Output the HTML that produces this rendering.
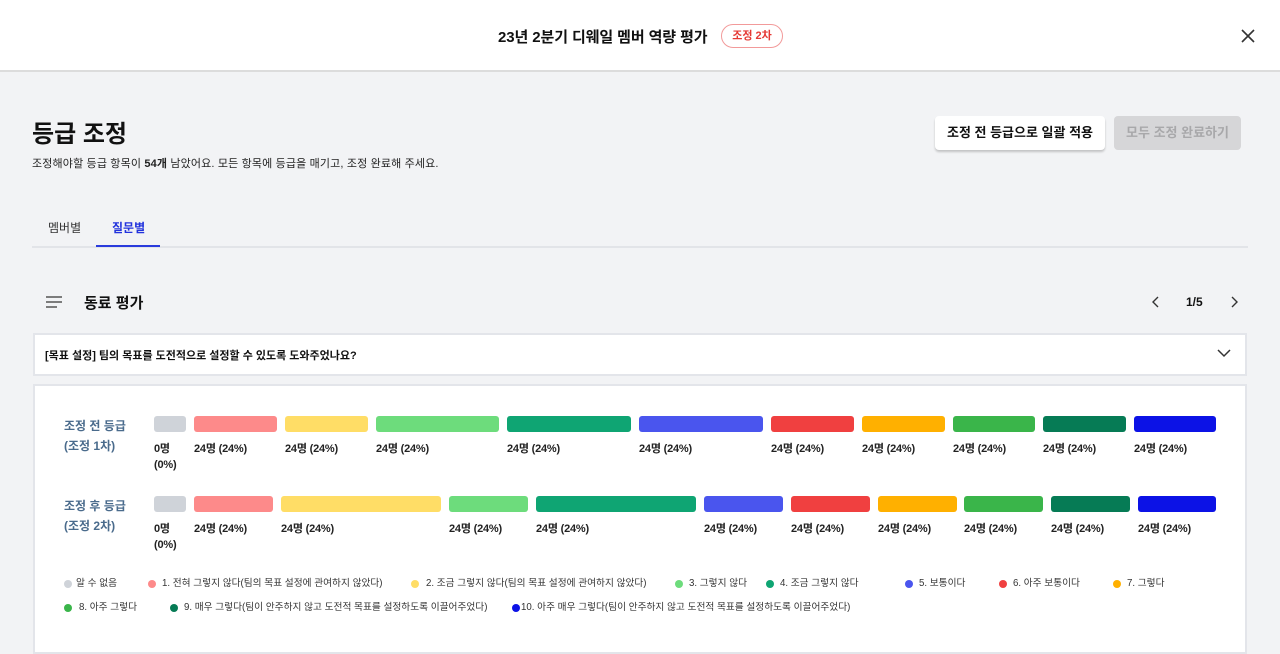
<!DOCTYPE html><html><head><meta charset="utf-8"><style>
*{margin:0;padding:0;box-sizing:border-box}
body{width:1280px;height:648px;overflow:hidden;background:#f2f3f5;font-family:"Liberation Sans","Noto Sans CJK KR",sans-serif;color:#111;position:relative}
.a{position:absolute;white-space:nowrap}
.bar{position:absolute;height:16px;border-radius:3px}
.lb{position:absolute;font-size:11px;font-weight:bold;color:#222;line-height:16px;letter-spacing:-0.2px}
.lg{position:absolute;font-size:9.7px;color:#333;line-height:12px;white-space:nowrap}
.dot{position:absolute;width:8px;height:8px;border-radius:50%}
</style></head><body>
<div class="a" style="left:0;top:0;width:1280px;height:72px;background:#fff;border-bottom:2px solid #dcdcdc"></div>
<div class="a" style="left:498px;top:26px;font-size:15px;font-weight:bold;letter-spacing:-0.1px">23년 2분기 디웨일 멤버 역량 평가</div>
<div class="a" style="left:721px;top:24px;height:24px;width:62px;border:1px solid #f29a9a;border-radius:12px;color:#e53935;font-size:11px;font-weight:bold;text-align:center;line-height:22px">조정 2차</div>
<svg class="a" style="left:1240px;top:28px" width="16" height="16"><path d="M2 2L14 14M14 2L2 14" stroke="#333" stroke-width="1.6"/></svg>
<div class="a" style="left:32px;top:114px;font-size:24px;font-weight:bold">등급 조정</div>
<div class="a" style="left:32px;top:155px;font-size:11px;color:#222;letter-spacing:0.15px">조정해야할 등급 항목이 <b>54개</b> 남았어요. 모든 항목에 등급을 매기고, 조정 완료해 주세요.</div>
<div class="a" style="left:935px;top:116px;width:170px;height:34px;background:#fff;border-radius:4px;box-shadow:0 2px 2px rgba(0,0,0,.2);font-size:13px;font-weight:bold;text-align:center;line-height:34px">조정 전 등급으로 일괄 적용</div>
<div class="a" style="left:1114px;top:116px;width:127px;height:34px;background:#d6d6d8;border-radius:4px;font-size:13px;font-weight:bold;color:#a8a8aa;text-align:center;line-height:34px">모두 조정 완료하기</div>
<div class="a" style="left:48px;top:219px;font-size:12px;color:#333">멤버별</div>
<div class="a" style="left:112px;top:219px;font-size:12px;color:#2233dd;font-weight:bold">질문별</div>
<div class="a" style="left:32px;top:246px;width:1216px;height:2px;background:#e2e4e8"></div>
<div class="a" style="left:96px;top:245px;width:64px;height:2px;background:#2a3bdc"></div>
<svg class="a" style="left:46px;top:296px" width="16" height="12"><path d="M0 1H16M0 6H16M0 11H11" stroke="#555" stroke-width="1.4"/></svg>
<div class="a" style="left:84px;top:292px;font-size:15px;font-weight:bold">동료 평가</div>
<svg class="a" style="left:1152px;top:296px" width="8" height="12"><path d="M6 1L1 6L6 11" stroke="#333" stroke-width="1.4" fill="none"/></svg>
<div class="a" style="left:1186px;top:295px;font-size:12px;font-weight:bold">1/5</div>
<svg class="a" style="left:1230px;top:296px" width="8" height="12"><path d="M2 1L7 6L2 11" stroke="#333" stroke-width="1.4" fill="none"/></svg>
<div class="a" style="left:33px;top:333px;width:1214px;height:43px;background:#fff;border:2px solid #e3e5ea"></div>
<div class="a" style="left:45px;top:347px;font-size:11px;font-weight:bold">[목표 설정] 팀의 목표를 도전적으로 설정할 수 있도록 도와주었나요?</div>
<svg class="a" style="left:1217px;top:349px" width="14" height="9"><path d="M1 1L7 7L13 1" stroke="#333" stroke-width="1.5" fill="none"/></svg>
<div class="a" style="left:33px;top:384px;width:1214px;height:270px;background:#fff;border:2px solid #e3e5ea"></div>
<div class="a" style="left:64px;top:416px;font-size:12px;font-weight:bold;color:#4a6b8c;line-height:20px">조정 전 등급<br>(조정 1차)</div>
<div class="a" style="left:64px;top:496px;font-size:12px;font-weight:bold;color:#4a6b8c;line-height:20px">조정 후 등급<br>(조정 2차)</div>
<!-- row1 -->
<div class="bar" style="top:416px;left:154px;width:32px;background:#cfd3d9"></div>
<div class="bar" style="top:416px;left:194px;width:83px;background:#fd8a8a"></div>
<div class="bar" style="top:416px;left:285px;width:83px;background:#ffdd66"></div>
<div class="bar" style="top:416px;left:376px;width:123px;background:#6ddc7c"></div>
<div class="bar" style="top:416px;left:507px;width:124px;background:#0fa573"></div>
<div class="bar" style="top:416px;left:639px;width:124px;background:#4a55ee"></div>
<div class="bar" style="top:416px;left:771px;width:83px;background:#f04040"></div>
<div class="bar" style="top:416px;left:862px;width:83px;background:#ffb000"></div>
<div class="bar" style="top:416px;left:953px;width:82px;background:#3ab54a"></div>
<div class="bar" style="top:416px;left:1043px;width:83px;background:#067b55"></div>
<div class="bar" style="top:416px;left:1134px;width:82px;background:#0c12e6"></div>
<div class="lb" style="top:441px;left:154px">0명<br>(0%)</div>
<div class="lb" style="top:441px;left:194px">24명 (24%)</div><div class="lb" style="top:441px;left:285px">24명 (24%)</div><div class="lb" style="top:441px;left:376px">24명 (24%)</div><div class="lb" style="top:441px;left:507px">24명 (24%)</div><div class="lb" style="top:441px;left:639px">24명 (24%)</div><div class="lb" style="top:441px;left:771px">24명 (24%)</div><div class="lb" style="top:441px;left:862px">24명 (24%)</div><div class="lb" style="top:441px;left:953px">24명 (24%)</div><div class="lb" style="top:441px;left:1043px">24명 (24%)</div><div class="lb" style="top:441px;left:1134px">24명 (24%)</div>
<!-- row2 -->
<div class="bar" style="top:496px;left:154px;width:32px;background:#cfd3d9"></div>
<div class="bar" style="top:496px;left:194px;width:79px;background:#fd8a8a"></div>
<div class="bar" style="top:496px;left:281px;width:160px;background:#ffdd66"></div>
<div class="bar" style="top:496px;left:449px;width:79px;background:#6ddc7c"></div>
<div class="bar" style="top:496px;left:536px;width:160px;background:#0fa573"></div>
<div class="bar" style="top:496px;left:704px;width:79px;background:#4a55ee"></div>
<div class="bar" style="top:496px;left:791px;width:79px;background:#f04040"></div>
<div class="bar" style="top:496px;left:878px;width:79px;background:#ffb000"></div>
<div class="bar" style="top:496px;left:964px;width:79px;background:#3ab54a"></div>
<div class="bar" style="top:496px;left:1051px;width:79px;background:#067b55"></div>
<div class="bar" style="top:496px;left:1138px;width:78px;background:#0c12e6"></div>
<div class="lb" style="top:521px;left:154px">0명<br>(0%)</div>
<div class="lb" style="top:521px;left:194px">24명 (24%)</div><div class="lb" style="top:521px;left:281px">24명 (24%)</div><div class="lb" style="top:521px;left:449px">24명 (24%)</div><div class="lb" style="top:521px;left:536px">24명 (24%)</div><div class="lb" style="top:521px;left:704px">24명 (24%)</div><div class="lb" style="top:521px;left:791px">24명 (24%)</div><div class="lb" style="top:521px;left:878px">24명 (24%)</div><div class="lb" style="top:521px;left:964px">24명 (24%)</div><div class="lb" style="top:521px;left:1051px">24명 (24%)</div><div class="lb" style="top:521px;left:1138px">24명 (24%)</div>
<!-- legend -->
<div class="dot" style="left:64px;top:580px;background:#cfd3d9"></div><div class="lg" style="left:76px;top:578px">알 수 없음</div>
<div class="dot" style="left:148px;top:580px;background:#fd8a8a"></div><div class="lg" style="left:162px;top:578px">1. 전혀 그렇지 않다(팀의 목표 설정에 관여하지 않았다)</div>
<div class="dot" style="left:411px;top:580px;background:#ffdd66"></div><div class="lg" style="left:426px;top:578px">2. 조금 그렇지 않다(팀의 목표 설정에 관여하지 않았다)</div>
<div class="dot" style="left:675px;top:580px;background:#6ddc7c"></div><div class="lg" style="left:689px;top:578px">3. 그렇지 않다</div>
<div class="dot" style="left:766px;top:580px;background:#0fa573"></div><div class="lg" style="left:780px;top:578px">4. 조금 그렇지 않다</div>
<div class="dot" style="left:905px;top:580px;background:#4a55ee"></div><div class="lg" style="left:919px;top:578px">5. 보통이다</div>
<div class="dot" style="left:999px;top:580px;background:#f04040"></div><div class="lg" style="left:1013px;top:578px">6. 아주 보통이다</div>
<div class="dot" style="left:1113px;top:580px;background:#ffb000"></div><div class="lg" style="left:1127px;top:578px">7. 그렇다</div>
<div class="dot" style="left:64px;top:604px;background:#3ab54a"></div><div class="lg" style="left:79px;top:602px">8. 아주 그렇다</div>
<div class="dot" style="left:170px;top:604px;background:#067b55"></div><div class="lg" style="left:184px;top:602px">9. 매우 그렇다(팀이 안주하지 않고 도전적 목표를 설정하도록 이끌어주었다)</div>
<div class="dot" style="left:512px;top:604px;background:#0c12e6"></div><div class="lg" style="left:521px;top:602px">10. 아주 매우 그렇다(팀이 안주하지 않고 도전적 목표를 설정하도록 이끌어주었다)</div>
</body></html>
